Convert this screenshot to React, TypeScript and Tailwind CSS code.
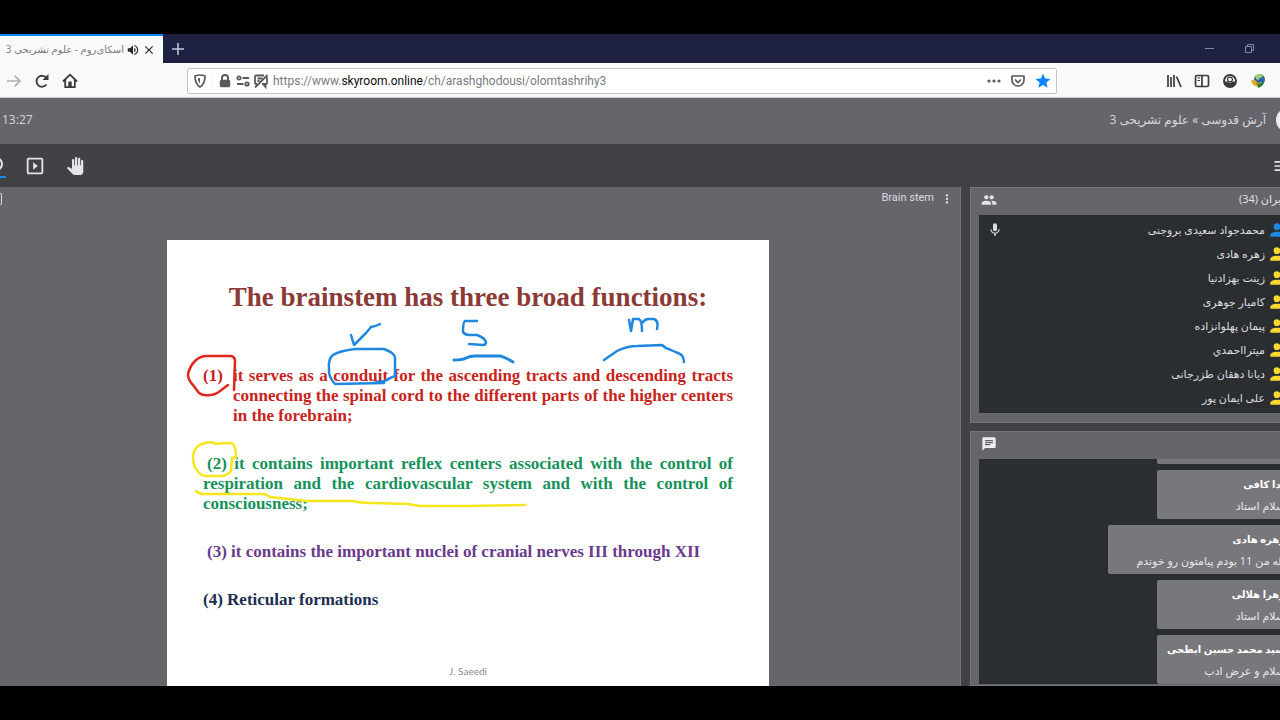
import { useState } from "react"
import { MdChat, MdClose, MdMenu, MdMic, MdMoreVert, MdOutlineSlideshow, MdPanTool, MdStar, MdVolumeUp } from "react-icons/md"

const users = [
  { name: "محمدجواد سعیدی بروجنی", host: true },
  { name: "زهره هادی" },
  { name: "زینت بهزادنیا" },
  { name: "کامیار جوهری" },
  { name: "پیمان پهلوانزاده" },
  { name: "میترااحمدي" },
  { name: "دیانا دهقان طزرجانی" },
  { name: "علی ایمان پور" },
]

const messages = [
  { name: "ندا کافی", text: "سلام استاد" },
  { name: "زهره هادی", text: "بله من 11 بودم پیامتون رو خوندم" },
  { name: "زهرا هلالی", text: "سلام استاد" },
  { name: "سید محمد حسین ابطحی", text: "سلام و عرض ادب" },
]

function PersonIcon({ className }: { className?: string }) {
  return (
    <svg viewBox="0 0 24 24" className={className} fill="currentColor">
      <path d="M12 4a4 4 0 1 1 0 8 4 4 0 0 1 0-8m0 10c4.420 0 8 1.790 8 4v2H4v-2c0-2.210 3.580-4 8-4z" />
    </svg>
  )
}

function PeopleIcon({ className }: { className?: string }) {
  return (
    <svg viewBox="0 0 24 24" className={className} fill="currentColor">
      <circle cx="8" cy="8" r="3.200" />
      <circle cx="16" cy="8" r="3.200" />
      <path d="M8 13c-2.330 0-7 1.170-7 3.500V19h14v-2.500c0-2.330-4.670-3.500-7-3.500zM16 13c-.3 0-.6 0-1 .05 1.200.85 2 2 2 3.450V19h6v-2.500c0-2.330-4.670-3.500-7-3.500z" />
    </svg>
  )
}

function TabStrip() {
  return (
    <div className="flex h-[29px] bg-[#1f2142]">
      <div
        dir="rtl"
        className="flex w-[163px] items-center gap-0.5 overflow-hidden border-t-2 border-[#0a84ff] bg-[#f9f9fa] pr-[7px]"
      >
        <button aria-label="Close tab">
          <MdClose className="size-3.5 text-[#2a2a2e]" />
        </button>
        <button aria-label="Mute tab">
          <MdVolumeUp className="size-3.5 text-[#2a2a2e]" />
        </button>
        <span className="text-[10px] whitespace-nowrap text-[#7a7a80]">اسکای‌روم - علوم تشریحی 3</span>
      </div>
      <button aria-label="New tab" className="px-2 text-[#c8c8d8]">
        <svg viewBox="0 0 14 14" className="size-3.5" fill="none" stroke="currentColor" strokeWidth="1.5">
          <path d="M7 1v12M1 7h12" />
        </svg>
      </button>
      <div className="ml-auto flex items-center gap-7 pr-6 text-[#85859c]">
        <button aria-label="Minimize">
          <svg viewBox="0 0 12 12" className="size-3" fill="none" stroke="currentColor">
            <path d="M1 5.500h9" />
          </svg>
        </button>
        <button aria-label="Restore">
          <svg viewBox="0 0 12 12" className="size-3" fill="none" stroke="currentColor">
            <path d="M1.500 3.500h6v6h-6zM3.500 3.500v-2h6v6h-2" />
          </svg>
        </button>
      </div>
    </div>
  )
}

function AddressBar() {
  const [url, setUrl] = useState("https://www.skyroom.online/ch/arashghodousi/olomtashrihy3")
  const [, prefix = "", domain = "", rest = ""] = url.match(/^(https?:\/\/(?:www\.)?)?([^/]*)(.*)$/) ?? []

  return (
    <div className="mx-[109px] flex h-[26px] flex-1 items-center rounded-xs border border-[#c4c4c8] bg-white px-1 text-[#5a5a5e]">
      <button aria-label="Tracking protection" className="mr-1 border-r border-gray-100 pr-1">
        <svg viewBox="0 0 16 16" className="size-4" fill="none" stroke="currentColor" strokeWidth="1.7">
          <path d="M8 2c2 0 3.500.4 5 1 0 5-.8 8.500-5 11-4.200-2.500-5-6-5-11 1.500-.6 3-1 5-1z" />
          <path d="M8 5v5.500c-1.500-1-2.200-3-2-5.200z" fill="currentColor" stroke="none" />
        </svg>
      </button>
      <button aria-label="Site information" className="flex items-center gap-0.5">
        <svg viewBox="0 0 16 16" className="size-4" fill="none" stroke="currentColor" strokeWidth="1.5">
          <rect x="3.500" y="7.500" width="9" height="6" rx="1" fill="currentColor" />
          <path d="M5 7V5a3 3 0 0 1 6 0v2" strokeWidth="2" />
        </svg>
        <svg viewBox="0 0 16 16" className="size-4" fill="none" stroke="currentColor" strokeWidth="1.8">
          <circle cx="4" cy="5" r="1.700" />
          <path d="M7.500 5H14M2 11h6.500" />
          <circle cx="12" cy="11" r="1.700" />
        </svg>
        <svg viewBox="0 0 16 16" className="size-4" fill="none" stroke="currentColor" strokeWidth="1.8">
          <path d="M11 2.500H3a1 1 0 0 0-1 1V10a1 1 0 0 0 1 1h1M14 4v6a1 1 0 0 1-1 1H9M4.500 5.500h5M4.500 8h2M10 11l2.500 3v-3" />
          <path d="M2 14.500 14.500 2" />
        </svg>
      </button>
      <div className="relative ml-1 flex-1 font-['Roboto'] text-[12px] leading-6 whitespace-pre">
        <span aria-hidden="true" className="text-[#7b7b80]">
          {prefix}
          <span className="text-[#0c0c0d]">{domain}</span>
          {rest}
        </span>
        <input
          aria-label="Address"
          value={url}
          onChange={(e) => setUrl(e.target.value)}
          className="absolute inset-0 w-full bg-transparent text-transparent caret-black outline-none"
        />
      </div>
      <div className="flex items-center gap-2">
        <button aria-label="Page actions">
          <svg viewBox="0 0 16 16" className="size-4" fill="currentColor">
            <circle cx="3" cy="8" r="1.600" />
            <circle cx="8" cy="8" r="1.600" />
            <circle cx="13" cy="8" r="1.600" />
          </svg>
        </button>
        <button aria-label="Save to Pocket">
          <svg viewBox="0 0 16 16" className="size-4" fill="none" stroke="currentColor" strokeWidth="1.7">
            <path d="M2 3h12v4a6 6 0 0 1-12 0z" strokeLinejoin="round" />
            <path d="m5 6.500 3 3 3-3" />
          </svg>
        </button>
        <button aria-label="Bookmark this page">
          <MdStar className="size-[18px] text-[#0a84ff]" />
        </button>
      </div>
    </div>
  )
}

function Toolbar() {
  return (
    <div className="flex h-[35px] items-center border-b border-[#c8c8cc] bg-[#f9f9fa] pt-0.5 pr-3.5 pl-1.5 text-[#3a3a3e]">
      <div className="flex items-center gap-3">
        <button aria-label="Forward" className="text-[#b0b0b4]">
          <svg viewBox="0 0 16 16" className="size-4" fill="none" stroke="currentColor" strokeWidth="1.7">
            <path d="M1 8h13M8.500 2.500 14 8l-5.500 5.500" />
          </svg>
        </button>
        <button aria-label="Reload">
          <svg viewBox="0 0 16 16" className="size-4" fill="none" stroke="currentColor" strokeWidth="1.8">
            <path d="M12.500 11.500A5.500 5.500 0 1 1 12.500 5" />
            <path d="M14.500 1v6H8.500z" fill="currentColor" stroke="none" />
          </svg>
        </button>
        <button aria-label="Home">
          <svg viewBox="0 0 16 16" className="size-4" fill="none" stroke="currentColor" strokeWidth="1.8">
            <path d="M1 8.500 8 1.700l7 6.800M3.200 7v7.200h9.600V7" strokeLinejoin="round" />
            <path d="M6.300 8.500h3.400v5.500H6.300z" fill="currentColor" stroke="none" />
          </svg>
        </button>
      </div>
      <AddressBar />
      <div className="flex items-center gap-3">
        <button aria-label="Library">
          <svg viewBox="0 0 16 16" className="size-4" fill="none" stroke="currentColor" strokeWidth="1.7">
            <path d="M2 2v12M5 4v10M8 2v12M10.500 3.500 15 14" />
          </svg>
        </button>
        <button aria-label="Sidebars">
          <svg viewBox="0 0 16 16" className="size-4" fill="none" stroke="currentColor" strokeWidth="1.7">
            <rect x="1.500" y="2.500" width="13" height="11" rx="1.500" />
            <path d="M8 2.500v11" />
            <path d="M3.500 5H6M3.500 7.500H6" strokeWidth="1" />
          </svg>
        </button>
        <button aria-label="Account">
          <svg viewBox="0 0 16 16" className="size-4" fill="none" stroke="currentColor" strokeWidth="1.9">
            <circle cx="8" cy="8" r="6" />
            <path d="M2.500 8.500H5.500a3 3 0 0 0 5 0h3a5.500 5.500 0 0 1-11 0z" fill="currentColor" stroke="none" />
            <circle cx="8" cy="6.500" r="2.400" strokeWidth="1.2" />
          </svg>
        </button>
        <button aria-label="Download manager">
          <svg viewBox="0 0 16 16" className="size-4">
            <circle cx="9.500" cy="6.500" r="5.500" fill="#2f64b0" />
            <path d="M5 3c2-3 7-2 8 0-1 2-3 1-4 3s-3 1-4-3z" fill="#9fd070" />
            <path d="M1 8c2-2 4-1 5 0l2 2 4-1-3 6-3-2c-2 0-4-2-5-5z" fill="#e0b020" />
            <path d="M5 9c3 3 6 2 9-1 0 4-3 6-6 7 1-2-1-4-3-6z" fill="#1f7a35" />
          </svg>
        </button>
      </div>
    </div>
  )
}

function RoomHeader() {
  return (
    <header className="flex h-[46px] items-center justify-between overflow-hidden bg-[#66656b] pb-0.5 pl-0.5 text-[#d8d8dc]">
      <time className="text-[12px]">13:27</time>
      <div dir="rtl" className="-mr-5 flex items-center gap-2.5">
        <span className="size-6 rounded-full bg-[#eeeef0]" />
        <h1 className="text-[12px]">آرش قدوسی » علوم تشریحی 3</h1>
      </div>
    </header>
  )
}

function RoomTools() {
  return (
    <nav className="flex h-[43px] items-center overflow-hidden bg-[#404246] text-[#e4e4e8]">
      <button aria-label="Microphone" className="-ml-3.5 border-b-2 border-[#1e88e5] pb-0.5">
        <svg viewBox="0 0 20 20" className="size-5" fill="none" stroke="currentColor" strokeWidth="2">
          <circle cx="10" cy="10" r="6" />
        </svg>
      </button>
      <button aria-label="Share media" className="ml-[18px]">
        <MdOutlineSlideshow className="size-[22px]" />
      </button>
      <button aria-label="Raise hand" className="ml-5">
        <MdPanTool className="size-[18px]" />
      </button>
      <button aria-label="Menu" className="-mr-3 ml-auto">
        <MdMenu className="size-5" />
      </button>
    </nav>
  )
}

function Annotations() {
  return (
    <svg
      viewBox="0 0 602 446"
      className="pointer-events-none absolute inset-0 size-full"
      fill="none"
      strokeWidth="2.5"
      strokeLinecap="round"
      strokeLinejoin="round"
    >
      <g stroke="#e1261c">
        <path d="M61 145 53 151Q48 155 43 155Q36 156 32 153L26 145Q21 140 21 134Q23 126 28 121Q33 116 40 116L64 116Q68 117 68 121L67 150" />
      </g>
      <g stroke="#1e88e0">
        <path d="M184 95 187 105 199 93 204 87Q210 86 213 84" />
        <path d="M217 143 168 144Q161 136 162 129Q161 119 166 115Q172 111 188 109L217 109Q228 113 228 118L228 136Q222 138 218 141L206 143" />
        <path d="M310 81 298 81Q296 82 296 92Q298 95 302 95L310 95Q318 98 319 102Q319 105 316 105L302 104" />
        <path d="M287 120Q296 120 299 118Q303 116 308 116L333 116Q338 117 346 122" strokeWidth="3" />
        <path d="M462 80 464 91 466 79 472 79Q475 81 475 91M475 83Q478 79 481 79L487 79Q492 81 490 89" />
        <path d="M437 120 450 111Q460 106 470 106L495 105Q499 109 504 110Q508 112 511 113Q517 115 517 122" />
      </g>
      <g stroke="#f5e61e">
        <path d="M69 218Q69 203 63 203Q54 203 49 204Q45 201 38 203Q28 205 26 215Q26 227 30 230Q33 236 40 236L56 236Q62 234 64 231L65 218 69 217" />
        <path d="M29 251Q32 254 37 254L97 254Q101 255 103 257L140 261 186 261Q193 263 205 263L241 264Q246 265 253 266L300 266 358 265" />
      </g>
    </svg>
  )
}

function Slide() {
  return (
    <article className="relative mx-auto flex min-h-[446px] w-[602px] flex-col bg-white px-9 pt-10 font-['Liberation_Serif'] font-bold">
      <h2 className="text-center text-[27px] leading-[34px] whitespace-nowrap text-[#8b3a36]">
        The brainstem has three broad functions:
      </h2>
      <div className="mt-[52px] flex flex-1 flex-col gap-7 text-[17px] leading-5">
        <p className="flex text-justify text-[#c8241c]">
          <span className="w-[30px] shrink-0">(1)</span>
          <span>
            it serves as a conduit for the ascending tracts and descending tracts connecting the spinal cord to the
            different parts of the higher centers in the forebrain;
          </span>
        </p>
        <p className="text-justify indent-1 text-[#16925a]">
          (2) it contains important reflex centers associated with the control of respiration and the cardiovascular
          system and with the control of consciousness;
        </p>
        <p className="indent-1 text-[#6a3a8c]">(3) it contains the important nuclei of cranial nerves III through XII</p>
        <p className="text-[#1c2f50]">(4) Reticular formations</p>
      </div>
      <footer className="pb-2 text-center font-['Lato'] text-[10px] leading-[14px] font-normal text-[#8a8a8a]">
        J. Saeedi
      </footer>
      <Annotations />
    </article>
  )
}

function Board() {
  return (
    <main className="flex-1 border-r border-[#75757a] bg-[#66656b]">
      <div className="mb-[30px] flex h-[23px] items-center justify-end gap-1.5 text-[#dcdce0]">
        <span className="mr-auto h-3 w-0.5 rounded-r-xs border-y border-r border-[#dcdce0]" />
        <h2 className="font-['Roboto'] text-[11px]">Brain stem</h2>
        <button aria-label="Board options" className="mr-1.5">
          <MdMoreVert className="size-3.5" />
        </button>
      </div>
      <div className="pr-6">
        <Slide />
      </div>
    </main>
  )
}

function UserList() {
  return (
    <section className="h-[236px] border border-[#75757a] bg-[#66656b] px-2">
      <div className="flex h-[27px] items-center justify-between pb-1 pl-0.5 text-[#e4e4e8]">
        <h2 className="text-[11px]">کاربران (34)</h2>
        <PeopleIcon className="size-4" />
      </div>
      <ul className="h-[198px] bg-[#2b2e31] pt-[3px] pr-2 pl-2 text-[#dcdce0]">
        {users.map((user) => (
          <li key={user.name} className="flex h-6 items-center gap-0.5">
            <PersonIcon className={user.host ? "size-5 text-[#1e88e5]" : "size-5 text-[#fdd835]"} />
            <span className="text-[11px]">{user.name}</span>
            {user.host && <MdMic className="mr-auto size-4" />}
          </li>
        ))}
      </ul>
    </section>
  )
}

function Chat() {
  return (
    <section className="h-[255px] border border-[#75757a] bg-[#66656b] px-2">
      <div className="flex h-[27px] items-center justify-end pb-1 pl-0.5 text-[#eeeef0]">
        <MdChat className="size-4" />
      </div>
      <ul className="flex h-[225px] flex-col items-start justify-end gap-1.5 overflow-hidden bg-[#2b2e31]">
        <li className="h-1.5 w-[138px] rounded-b-xs bg-[#78777c]" />
        {messages.map((message) => (
          <li
            key={message.name}
            className="h-[49px] min-w-[138px] shrink-0 rounded-xs bg-[#78777c] px-2.5 pt-1 text-[#e8e8ec]"
          >
            <p className="text-[10px] leading-5 font-bold text-white">{message.name}</p>
            <p className="pl-[18px] text-[11px] leading-6">{message.text}</p>
          </li>
        ))}
      </ul>
    </section>
  )
}

export default function App() {
  return (
    <div className="min-h-screen overflow-hidden bg-black py-[34px] font-['Open_Sans','DejaVu_Sans',sans-serif]">
      <TabStrip />
      <Toolbar />
      <RoomHeader />
      <RoomTools />
      <div className="flex gap-[9px] bg-[#404246]">
        <Board />
        <aside dir="rtl" className="-mr-6 flex w-[334px] shrink-0 flex-col gap-2">
          <UserList />
          <Chat />
        </aside>
      </div>
    </div>
  )
}
